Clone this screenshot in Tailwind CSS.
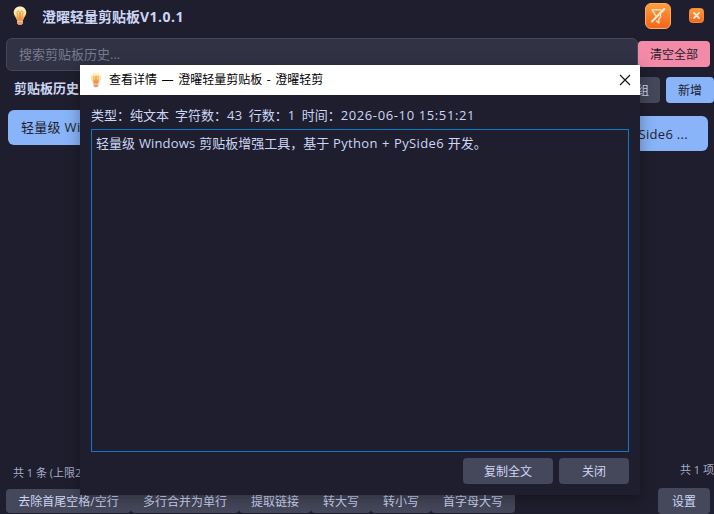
<!DOCTYPE html>
<html lang="zh-CN">

<head>
    <meta charset="UTF-8">
    <meta name="viewport" content="width=device-width, initial-scale=1.0">
    <title>澄曜轻量剪贴板</title>
    <script src="https://cdn.jsdelivr.net/npm/@tailwindcss/browser@4"></script>
    <style>
        body {
            font-family: 'Open Sans', 'Noto Sans CJK SC', sans-serif;
        }
    </style>
</head>

<body class="relative w-[714px] h-[514px] overflow-hidden bg-[#1e1e2e] text-[#cdd6f4] text-[13px] whitespace-nowrap">
    <!-- gradients shared by the icons -->
    <svg class="absolute w-0 h-0">
        <defs>
            <linearGradient id="bulb" x1="0" y1="0" x2="0" y2="1">
                <stop offset="0" stop-color="#fff6cf" />
                <stop offset=".6" stop-color="#fddc90" />
                <stop offset="1" stop-color="#ee9848" />
            </linearGradient>
            <linearGradient id="orange" x1="0" y1="0" x2="0" y2="1">
                <stop offset="0" stop-color="#ff9d3c" />
                <stop offset="1" stop-color="#f4641c" />
            </linearGradient>
            <symbol id="logo" viewBox="0 0 14 20">
                <path d="M7 .5C3.200 .5 .7 3.200 .7 6.500c0 3 2.300 4.500 3 7.500h6.600c.7-3 3-4.500 3-7.500C13.300 3.200 10.800 .5 7 .5z" fill="url(#bulb)" />
                <path d="M5.300 13.500L4 6.500c0-2 2.600-2 2.600 0v7M8.700 13.500L10 6.500c0-2-2.600-2-2.600 0v7" fill="none" stroke="#e8903a" stroke-width=".9" />
                <path d="M4 14h6v3.200L8.500 19h-3L4 17.200z" fill="#e39a6c" />
                <path d="M4 15.500h6" stroke="#fbd3a0" stroke-width=".7" />
            </symbol>
        </defs>
    </svg>

    <div class="flex flex-col h-full">
        <header class="flex h-[38px] pl-[13px] pr-[10px]">
            <svg class="w-[14px] h-5 mt-[6px]"><use href="#logo" /></svg>
            <h1 class="ml-[15px] mt-[7px] text-sm leading-5 font-bold">澄曜轻量剪贴板<span class="tracking-[.5px]">V1.0.1</span></h1>
            <svg class="w-[26px] h-[26px] ml-auto mt-[3px]" viewBox="0 0 26 26" fill="none">
                <rect x=".5" y=".5" width="25" height="25" rx="5.500" fill="url(#orange)" stroke="#ffad63" />
                <path d="M15.500 6.700H7l4 6.300M15.500 11.500v3l-1.700 1.500v4l-2.300-2" stroke="#ffe0b8" stroke-width="1.500" stroke-linejoin="round" stroke-linecap="round" />
                <path d="M19.300 6L7 18.500" stroke="#fff3e0" stroke-width="1.900" stroke-linecap="round" />
            </svg>
            <svg class="w-[15px] h-[15px] ml-[18px] mt-[8px]" viewBox="0 0 15 15">
                <rect x=".5" y=".5" width="14" height="14" rx="3" fill="url(#orange)" stroke="#f98a3e" />
                <path d="M4.900 4.900l5.200 5.200M10.100 4.900l-5.200 5.200" stroke="#ffecd6" stroke-width="1.900" stroke-linecap="round" />
            </svg>
        </header>

        <div class="flex h-[33px] pl-[6px]">
            <div class="w-[632px] h-[33px] pl-3 leading-[31px] rounded-md border border-[#45475a] bg-[#313244] text-[#777b91]">搜索剪贴板历史...</div>
            <button class="w-[72px] h-[26px] mt-[3px] pt-px rounded bg-[#f38ba8] text-[#1e1e2e] text-xs">清空全部</button>
        </div>

        <div class="flex justify-between flex-1">
            <section class="flex flex-col w-[340px] pl-2">
                <h2 class="mt-[7px] pl-[6px] leading-5 font-bold">剪贴板历史</h2>
                <div class="mt-[12px] h-[35px] pl-[13px] leading-[35px] rounded-md bg-[#89b4fa] text-[#1e1e2e]"><span class="tracking-[.3px]">轻量级 Wi</span></div>
                <p class="mt-auto mb-[5px] pl-[5px] text-[11px] leading-5 text-[#a6adc8]">共 1 条 (上限2</p>
            </section>
            <section class="flex flex-col w-[340px]">
                <div class="flex justify-end gap-[6px] mt-[6px]">
                    <button class="w-[60px] h-[26px] pt-px pr-[11px] text-right rounded bg-[#45475a] text-xs">组</button>
                    <button class="w-[48px] h-[26px] pt-px rounded bg-[#89b4fa] text-[#1e1e2e] text-xs">新增</button>
                </div>
                <div class="mt-[13px] mr-[6px] h-[35px] pr-[20px] text-right leading-[36px] tracking-[.3px] rounded-md bg-[#89b4fa] text-[#1e1e2e]">Side6 ...</div>
                <p class="mt-auto mb-[8px] text-right text-[11px] leading-5 text-[#a6adc8]">共 1 项</p>
            </section>
        </div>

        <footer class="flex h-[26px] pl-[6px] pr-1 text-xs">
            <button class="w-[125px] h-6 mt-px pt-[2px] rounded bg-[#45475a]">去除首尾空格/空行</button>
            <button class="w-[108px] h-6 mt-px pt-[2px] rounded bg-[#45475a]">多行合并为单行</button>
            <button class="w-[72px] h-6 mt-px pt-[2px] rounded bg-[#45475a]">提取链接</button>
            <button class="w-[60px] h-6 mt-px pt-[2px] rounded bg-[#45475a]">转大写</button>
            <button class="w-[60px] h-6 mt-px pt-[2px] rounded bg-[#45475a]">转小写</button>
            <button class="w-[84px] h-6 mt-px pt-[2px] rounded bg-[#45475a]">首字母大写</button>
            <button class="w-[52px] h-[26px] pt-[2px] ml-auto rounded bg-[#45475a]">设置</button>
        </footer>
    </div>

    <!-- detail window -->
    <div class="absolute left-[80px] top-[65px] w-[560px] h-[430px] flex flex-col bg-[#1e1e2e] shadow-[0_3px_14px_rgba(0,0,0,.35)]">
        <div class="flex items-center h-[30px] pl-[10px] pr-[9px] bg-white text-black text-xs">
            <svg class="w-3 h-4"><use href="#logo" /></svg>
            <span class="ml-[7px] [word-spacing:1.5px]">查看详情 — 澄曜轻量剪贴板 - 澄曜轻剪</span>
            <svg class="w-3 h-3 ml-auto" viewBox="0 0 12 12"><path d="M1 1l10 10M11 1L1 11" stroke="#111" stroke-width="1.100" /></svg>
        </div>
        <div class="flex flex-col flex-1 px-[11px] pb-[11px]">
            <div class="flex gap-[6px] mt-[10px] leading-5">
                <span>类型：纯文本</span>
                <span>字符数：<span class="tracking-[.4px]">43</span></span>
                <span>行数：1</span>
                <span class="ml-[.5px]">时间：<span class="tracking-[.62px]">2026-06-10 15:51:21</span></span>
            </div>
            <div class="mt-[4px] h-[323px] px-1 pt-[3px] leading-5 [word-spacing:.5px] border border-[#0f78c8]">轻量级 <span class="tracking-[.15px]">Windows</span> 剪贴板增强工具，基于 <span class="tracking-[.35px]">Python + PySide6</span> 开发。</div>
            <div class="flex justify-end gap-[6px] mt-auto text-xs">
                <button class="w-[90px] h-[26px] pt-[2px] rounded bg-[#45475a]">复制全文</button>
                <button class="w-[70px] h-[26px] pt-[2px] rounded bg-[#45475a]">关闭</button>
            </div>
        </div>
    </div>
</body>

</html>
